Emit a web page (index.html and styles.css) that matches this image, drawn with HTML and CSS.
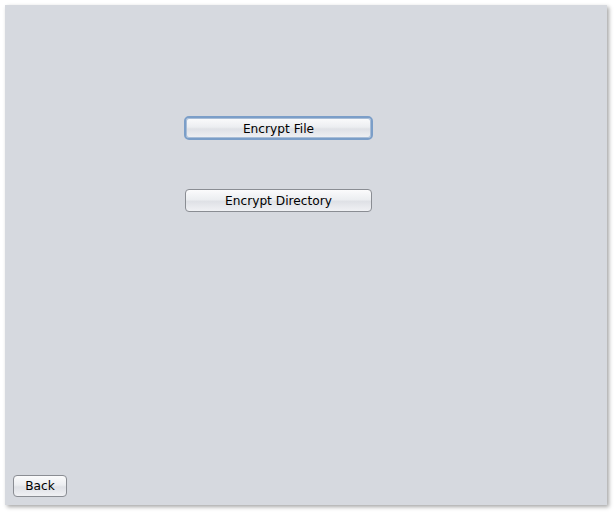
FILE: index.html
```html
<!DOCTYPE html>
<html>
<head>
<meta charset="utf-8">
<link rel="stylesheet" href="styles.css">
</head>
<body>
<div class="window">
  <div class="center">
    <button class="btn focused">Encrypt File</button>
    <button class="btn">Encrypt Directory</button>
  </div>
  <div class="footer">
    <button class="btn back">Back</button>
  </div>
</div>
</body>
</html>
```
FILE: styles.css
```css
html, body {
  margin: 0;
  padding: 0;
  background: #ffffff;
}
body {
  width: 614px;
  height: 514px;
  overflow: hidden;
  font-family: "DejaVu Sans", sans-serif;
}
.window {
  margin: 5px 0 0 5px;
  width: 602px;
  height: 500px;
  background: #d6d9df;
  box-shadow: 2px 2px 4px rgba(0,0,0,0.35);
  display: flex;
  flex-direction: column;
}
.center {
  display: flex;
  flex-direction: column;
  align-items: flex-start;
  padding: 111px 0 0 180px;
  gap: 49px;
  flex: 1;
}
.btn {
  font-family: "DejaVu Sans", sans-serif;
  font-size: 12.2px;
  color: #000;
  width: 187px;
  height: 23px;
  border: 1px solid #8a8d93;
  border-radius: 4px;
  background: linear-gradient(#fbfbfc 0%, #eceef1 45%, #dfe1e6 55%, #f0f1f4 100%);
  padding: 1px 0 0 0;
  line-height: 20px;
  margin: 0;
}
.btn.focused {
  width: 189px;
  height: 24px;
  margin-left: -1px;
  border: 2px solid #7b9ec8;
  border-radius: 5px;
  box-shadow: inset 0 0 0 1px #a8bdd7;
}
.footer {
  padding: 0 0 8px 8px;
}
.btn.back {
  width: 54px;
  height: 22px;
  line-height: 19px;
}
```
